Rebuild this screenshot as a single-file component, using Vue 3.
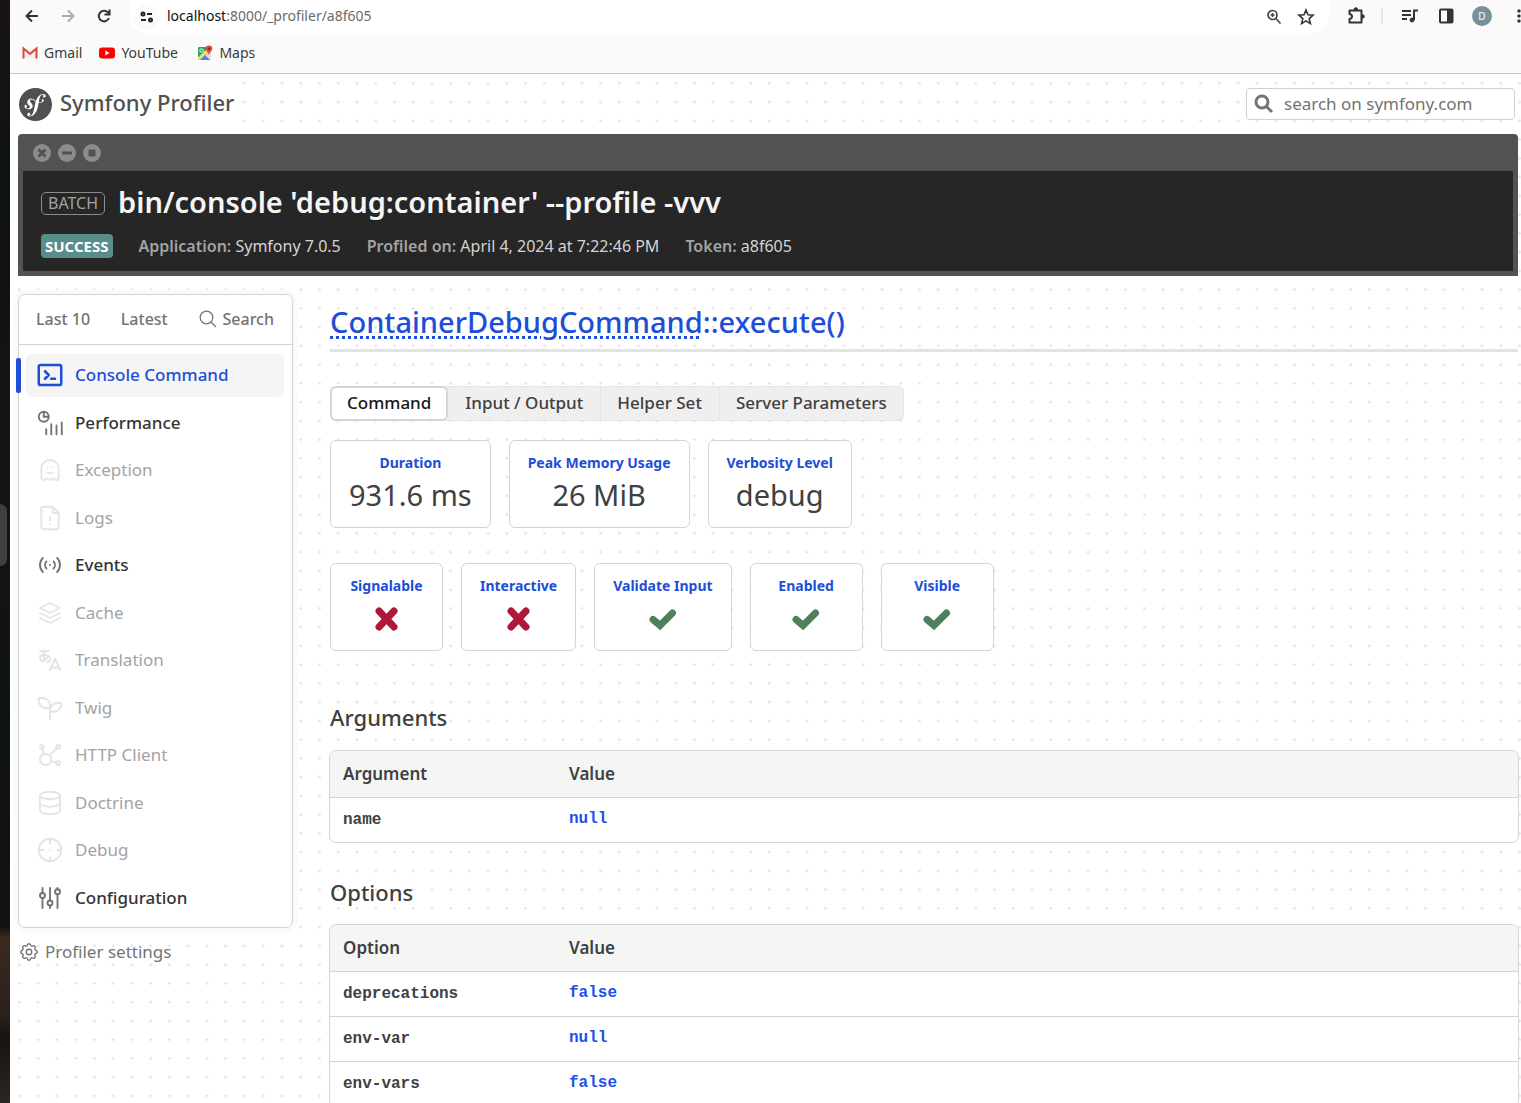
<script setup>
import { ref } from 'vue'

const menu = [
  { label: 'Console Command', state: 'active', icon: '<rect x="3" y="4" width="18" height="16" rx="1.5"/><path d="M8 9l3 3l-3 3M13 15h3"/>' },
  { label: 'Performance', state: 'enabled', icon: '<circle cx="7" cy="7" r="4"/><path d="M7 3.5v3.5h3.5M9 17v4M13 13v8M17.200 14v7M21.400 11.500v9.500"/>' },
  { label: 'Exception', state: 'disabled', icon: '<path d="M5 11a7 7 0 0 1 14 0v7a1.780 1.780 0 0 1 -3.100 1.400a1.650 1.650 0 0 0 -2.600 0a1.650 1.650 0 0 1 -2.600 0a1.650 1.650 0 0 0 -2.600 0a1.780 1.780 0 0 1 -3.100 -1.400v-7M10 10h.01M14 10h.01M10 14a3.500 3.500 0 0 0 4 0"/>' },
  { label: 'Logs', state: 'disabled', icon: '<path d="M14 3v4a1 1 0 0 0 1 1h4M17 21h-10a2 2 0 0 1 -2 -2v-14a2 2 0 0 1 2 -2h7l5 5v11a2 2 0 0 1 -2 2zM12 17h.01M12 11v3"/>' },
  { label: 'Events', state: 'enabled', icon: '<path d="M12 12h.01M14.828 9.172a4 4 0 0 1 0 5.656M17.657 6.343a8 8 0 0 1 0 11.314M9.168 14.828a4 4 0 0 1 0 -5.656M6.337 17.657a8 8 0 0 1 0 -11.314"/>' },
  { label: 'Cache', state: 'disabled', icon: '<path d="M12 4l-8 4l8 4l8 -4zM4 12l8 4l8 -4M4 16l8 4l8 -4"/>' },
  { label: 'Translation', state: 'disabled', icon: '<path d="M4 5h7M7 4c0 4.846 0 7 .5 8M10 8.500c0 2.286 -2 4.500 -3.500 4.500s-2.500 -1.135 -2.500 -2c0 -2 1 -3 3 -3s5 .57 5 2.857c0 1.524 -.667 2.571 -2 3.143M12 20l4 -9l4 9M19.100 18h-6.200"/>' },
  { label: 'Twig', state: 'disabled', icon: '<path d="M12 10a6 6 0 0 0 -6 -6h-3v2a6 6 0 0 0 6 6h3M12 14a6 6 0 0 1 6 -6h3v1a6 6 0 0 1 -6 6h-3M12 21v-11"/>' },
  { label: 'HTTP Client', state: 'disabled', icon: '<path d="M5.931 6.936l1.275 4.249m5.607 5.609l4.251 1.275M11.683 12.317l5.759 -5.759"/><circle cx="5.500" cy="5.500" r="1.500"/><circle cx="18.500" cy="5.500" r="1.500"/><circle cx="18.500" cy="18.500" r="1.500"/><circle cx="8.500" cy="15.500" r="4.500"/>' },
  { label: 'Doctrine', state: 'disabled', icon: '<ellipse cx="12" cy="6" rx="8" ry="3"/><path d="M4 6v6a8 3 0 0 0 16 0v-6M4 12v6a8 3 0 0 0 16 0v-6"/>' },
  { label: 'Debug', state: 'disabled', icon: '<circle cx="12" cy="12" r="9"/><path d="M12 3v4M12 21v-3M3 12h4M21 12h-3M12 12h.01"/>' },
  { label: 'Configuration', state: 'enabled', icon: '<circle cx="6" cy="10" r="2"/><circle cx="12" cy="16" r="2"/><circle cx="18" cy="7" r="2"/><path d="M6 4v4M6 12v8M12 4v10M12 18v2M18 4v1M18 9v11"/>' },
]

const tabs = ['Command', 'Input / Output', 'Helper Set', 'Server Parameters']
const currentTab = ref('Command')

const metrics = [
  { label: 'Duration', value: '931.6 ms' },
  { label: 'Peak Memory Usage', value: '26 MiB' },
  { label: 'Verbosity Level', value: 'debug' },
]

const flags = [
  { label: 'Signalable', on: false },
  { label: 'Interactive', on: false },
  { label: 'Validate Input', on: true },
  { label: 'Enabled', on: true },
  { label: 'Visible', on: true },
]

const tables = [
  { title: 'Arguments', column: 'Argument', rows: [['name', 'null']] },
  { title: 'Options', column: 'Option', rows: [['deprecations', 'false'], ['env-var', 'null'], ['env-vars', 'false']] },
]
</script>

<template>
  <div class="desktop">
    <div class="wallpaper"><span class="dock-edge"></span></div>
    <div class="browser">
      <div class="chrome">
        <div class="toolbar">
          <button class="tool" aria-label="Back">
            <svg width="18" height="18" viewBox="0 0 18 18" fill="none" stroke="#333" stroke-width="2"><path d="M15 9H4M9 3.500L3.500 9L9 14.500" /></svg>
          </button>
          <button class="tool" aria-label="Forward" disabled>
            <svg width="18" height="18" viewBox="0 0 18 18" fill="none" stroke="#aaa" stroke-width="2"><path d="M3 9H14M9 3.500L14.500 9L9 14.500" /></svg>
          </button>
          <button class="tool" aria-label="Reload">
            <svg width="18" height="18" viewBox="0 0 18 18" fill="none" stroke="#333" stroke-width="2"><path d="M14 11a5.300 5.300 0 1 1 -1.200 -5.700l1.700 1.700" /><path d="M14.500 2.500v5h-5" /></svg>
          </button>
          <div class="omnibox">
            <button class="site-info" aria-label="Site information">
              <svg width="14" height="12" viewBox="0 0 14 12" fill="none" stroke="#222" stroke-width="2"><circle cx="3" cy="3" r="1.500" /><path d="M7 3h5M1 9h5" /><circle cx="10.500" cy="9" r="1.500" /></svg>
            </button>
            <span class="url"><b>localhost</b>:8000/_profiler/a8f605</span>
            <button class="tool" aria-label="Zoom">
              <svg width="18" height="18" viewBox="0 0 18 18" fill="none" stroke="#444" stroke-width="1.700"><circle cx="7.500" cy="7" r="4.500" /><path d="M11 10.500L15.500 15.500" /><path d="M7.500 5v4M5.500 7h4" stroke-width="1.500" /></svg>
            </button>
            <button class="tool" aria-label="Bookmark">
              <svg width="18" height="18" viewBox="0 0 18 18" fill="none" stroke="#333" stroke-width="1.600"><path d="M9 2l2 4.800l5.100 .4l-3.900 3.400l1.200 5l-4.400 -2.700l-4.400 2.700l1.200 -5l-3.900 -3.400l5.100 -.4z" /></svg>
            </button>
          </div>
          <div class="actions">
            <button class="tool" aria-label="Extensions">
              <svg width="18" height="18" viewBox="0 0 18 18" fill="none" stroke="#333" stroke-width="2"><path d="M2.500 3.500h12v12h-12v-3.500q2.500 -.5 2.500 -2.500t-2.500 -2.500z" stroke-linejoin="round" /><path d="M7 2.500a1.800 1.800 0 0 1 3.600 0zM15.500 7.700a1.800 1.800 0 0 1 0 3.600z" fill="#333" stroke-width="1" /></svg>
            </button>
            <span class="divider"></span>
            <button class="tool" aria-label="Media controls">
              <svg width="18" height="18" viewBox="0 0 18 18" fill="none" stroke="#333" stroke-width="2"><path d="M1 4h9M1 8h9M1 12h5M13 13v-9.500h4" /><circle cx="11" cy="13" r="2" fill="#333" stroke-width="1" /></svg>
            </button>
            <button class="tool" aria-label="Side panel">
              <svg width="18" height="18" viewBox="0 0 18 18"><rect x="3" y="2.500" width="12.500" height="13" rx="1" fill="none" stroke="#333" stroke-width="2" /><path d="M10 2h6v14h-6z" fill="#333" /></svg>
            </button>
            <button class="avatar" aria-label="Profile">D</button>
            <button class="more" aria-label="Menu">
              <svg width="4" height="16" viewBox="0 0 4 16" fill="#333"><circle cx="2" cy="3" r="1.700" /><circle cx="2" cy="8" r="1.700" /><circle cx="2" cy="13" r="1.700" /></svg>
            </button>
          </div>
        </div>
        <nav class="bookmarks">
          <a href="#">
            <svg width="16" height="16" viewBox="0 0 16 16"><path d="M2 4v9h12v-9z" fill="#f1f1f1" /><path d="M1.500 13.500V3.500L8 9L14.500 3.500v10" fill="none" stroke="#d9483b" stroke-width="2" /></svg>
            Gmail
          </a>
          <a href="#">
            <svg width="16" height="16" viewBox="0 0 16 16"><rect x="0" y="2.500" width="16" height="11" rx="3" fill="#f00" /><path d="M6.300 5.500v5l4.300 -2.500z" fill="#fff" /></svg>
            YouTube
          </a>
          <a href="#">
            <svg width="16" height="16" viewBox="0 0 16 16"><rect x="1" y="2" width="13" height="13" rx="1" fill="#2fa35a" /><path d="M1 14L11 5l3 3v7H2z" fill="#f7cf47" /><path d="M14 7v8h-2L8 11z" fill="#ddd" /><path d="M3 15l5 -5l5 5z" fill="#4285f4" /><path d="M1 12.500L11 3l2 2L2 15H1z" fill="#f4dc80" /><circle cx="4.500" cy="5.500" r="1.700" fill="none" stroke="#fff" /><path d="M12 0.500a3.300 3.300 0 0 1 3.300 3.300c0 2.200 -2.500 3 -3.300 6.200c-.8 -3.200 -3.300 -4 -3.300 -6.200a3.300 3.300 0 0 1 3.300 -3.300z" fill="#e8453c" /><circle cx="12" cy="3.800" r="1.200" fill="#8c2018" /></svg>
            Maps
          </a>
        </nav>
      </div>

      <div class="page">
        <header class="header">
          <h1>
            <svg width="33" height="33" viewBox="0 0 24 24" fill="#505050"><path d="M24 12c0 6.628-5.372 12-12 12S0 18.628 0 12 5.372 0 12 0s12 5.372 12 12zm-6.753-7.561c-1.220.042-2.283.715-3.075 1.644-.878 1.020-1.461 2.229-1.881 3.461-.753-.614-1.332-1.414-2.539-1.761-.966-.297-2.015-.105-2.813.514-.41.319-.71.757-.861 1.254-.36 1.176.381 2.225.719 2.600l.737.79c.15.154.519.56.339 1.138-.193.631-.951 1.037-1.732.799-.348-.106-.848-.366-.734-.73.045-.15.152-.263.21-.391.052-.11.077-.194.095-.242.141-.465-.053-1.070-.551-1.223-.465-.143-.939-.03-1.125.566-.209.68.117 1.913 1.860 2.449 2.040.628 3.765-.484 4.009-1.932.153-.907-.255-1.582-1.006-2.447l-.612-.677c-.371-.37-.497-1.002-.114-1.485.324-.409.785-.584 1.539-.379 1.103.3 1.594 1.063 2.412 1.680-.338 1.110-.56 2.223-.759 3.222l-.123.746c-.585 3.070-1.033 4.757-2.194 5.726-.234.166-.57.416-1.073.434-.266.005-.352-.176-.355-.257-.006-.184.15-.271.255-.353.154-.083.39-.224.372-.674-.016-.532-.456-.994-1.094-.973-.477.017-1.203.465-1.176 1.286.028.85.819 1.485 2.012 1.444.638-.021 2.062-.281 3.464-1.949 1.633-1.911 2.090-4.101 2.434-5.706l.383-2.117c.213.024.439.042.688.048 2.032.044 3.049-1.010 3.064-1.776.01-.464-.304-.921-.744-.91-.386.009-.718.278-.806.654-.094.428.646.813.068 1.189-.41.266-1.146.452-2.184.3l.188-1.042c.386-1.976.859-4.407 2.661-4.467.132-.007.612.006.623.323.003.105-.022.134-.147.375-.115.155-.174.345-.168.537.017.504.4.836.957.816.743-.023.955-.748.945-1.119-.032-.874-.952-1.424-2.170-1.386z" /></svg>
            <span>Symfony Profiler</span>
          </h1>
          <form class="search" role="search" @submit.prevent>
            <label for="site-search" aria-label="Search">
              <svg width="20" height="20" viewBox="0 0 20 20" fill="none" stroke="#737373" stroke-width="3"><circle cx="8" cy="8" r="6" /><path d="M12.500 12.500l5.500 5.500" /></svg>
            </label>
            <input id="site-search" type="search" placeholder="search on symfony.com" />
          </form>
        </header>

        <section class="summary">
          <div class="window-bar">
            <svg width="18" height="18" viewBox="0 0 18 18"><circle cx="9" cy="9" r="9" fill="#8c8c8c" /><path d="M5.500 5.500l7 7M12.500 5.500l-7 7" stroke="#525252" stroke-width="3" /></svg>
            <svg width="18" height="18" viewBox="0 0 18 18"><circle cx="9" cy="9" r="9" fill="#8c8c8c" /><path d="M4 9h10" stroke="#525252" stroke-width="3" /></svg>
            <svg width="18" height="18" viewBox="0 0 18 18"><circle cx="9" cy="9" r="9" fill="#8c8c8c" /><rect x="5.500" y="5.500" width="7" height="7" rx="1" fill="#525252" /></svg>
          </div>
          <div class="terminal">
            <div class="command"><span class="batch">BATCH</span><h2>bin/console 'debug:container' --profile -vvv</h2></div>
            <dl class="metadata">
              <div class="status">SUCCESS</div>
              <div><dt>Application:</dt> <dd>Symfony 7.0.5</dd></div>
              <div><dt>Profiled on:</dt> <dd>April 4, 2024 at 7:22:46 PM</dd></div>
              <div><dt>Token:</dt> <dd>a8f605</dd></div>
            </dl>
          </div>
        </section>

        <div class="columns">
          <aside class="sidebar">
            <div class="panel">
              <div class="shortcuts">
                <a href="#">Last 10</a>
                <a href="#">Latest</a>
                <a href="#">
                  <svg width="18" height="18" viewBox="0 0 18 18" fill="none" stroke="currentColor" stroke-width="1.300"><circle cx="7.500" cy="7.500" r="6.300" /><path d="M12 12l5 5" /></svg>
                  Search
                </a>
              </div>
              <ul class="menu">
                <li v-for="item in menu" :key="item.label" :class="item.state">
                  <a href="#">
                    <svg width="30" height="30" viewBox="0 0 24 24" v-html="item.icon"></svg>
                    {{ item.label }}
                  </a>
                </li>
              </ul>
            </div>
            <a class="settings" href="#">
              <svg width="22" height="22" viewBox="0 0 24 24" fill="none" stroke="currentColor" stroke-width="1.500"><path d="M10.325 4.317c.426 -1.756 2.924 -1.756 3.350 0a1.724 1.724 0 0 0 2.573 1.066c1.543 -.94 3.310 .826 2.370 2.370a1.724 1.724 0 0 0 1.065 2.572c1.756 .426 1.756 2.924 0 3.350a1.724 1.724 0 0 0 -1.066 2.573c.94 1.543 -.826 3.310 -2.370 2.370a1.724 1.724 0 0 0 -2.572 1.065c-.426 1.756 -2.924 1.756 -3.350 0a1.724 1.724 0 0 0 -2.573 -1.066c-1.543 .94 -3.310 -.826 -2.370 -2.370a1.724 1.724 0 0 0 -1.065 -2.572c-1.756 -.426 -1.756 -2.924 0 -3.350a1.724 1.724 0 0 0 1.066 -2.573c-.94 -1.543 .826 -3.310 2.370 -2.370c1 .608 2.296 .07 2.572 -1.065z" /><circle cx="12" cy="12" r="3" /></svg>
              Profiler settings
            </a>
          </aside>

          <main class="content">
            <h2 class="title"><a href="#">ContainerDebugCommand</a>::execute()</h2>
            <div class="tabs" role="tablist">
              <button
                v-for="tab in tabs"
                :key="tab"
                role="tab"
                :aria-selected="tab === currentTab"
                :class="{ current: tab === currentTab }"
                @click="currentTab = tab"
              >{{ tab }}</button>
            </div>
            <div class="metrics">
              <div v-for="m in metrics" :key="m.label" class="metric">
                <span class="label">{{ m.label }}</span>
                <span class="value">{{ m.value }}</span>
              </div>
            </div>
            <div class="metrics">
              <div v-for="f in flags" :key="f.label" class="metric">
                <span class="label">{{ f.label }}</span>
                <span class="value icon">
                  <svg v-if="f.on" width="28" height="24" viewBox="0 0 28 24" fill="none" stroke="#4f805d" stroke-width="7" stroke-linecap="round"><path d="M4 12.500L11 18.500L23.500 6" /></svg>
                  <svg v-else width="28" height="24" viewBox="0 0 28 24" fill="none" stroke="#b0183a" stroke-width="7" stroke-linecap="round"><path d="M6 4L21 20M21 4L6 20" /></svg>
                </span>
              </div>
            </div>
            <section v-for="t in tables" :key="t.title" class="block">
              <h3>{{ t.title }}</h3>
              <table>
                <thead>
                  <tr><th scope="col">{{ t.column }}</th><th scope="col">Value</th></tr>
                </thead>
                <tbody>
                  <tr v-for="[name, value] in t.rows" :key="name"><th scope="row">{{ name }}</th><td>{{ value }}</td></tr>
                </tbody>
              </table>
            </section>
          </main>
        </div>
      </div>
    </div>
  </div>
</template>

<style>
html,
body {
  margin: 0;
  overflow: hidden;
}
</style>

<style scoped>
* {
  box-sizing: border-box;
}
.desktop {
  display: flex;
  height: 100vh;
  overflow: hidden;
  font-family: "Noto Sans", sans-serif;
  font-size: 17px;
  color: #404040;
}
h1, h2, h3, dl, dd, ul {
  margin: 0;
  padding: 0;
  font-weight: 500;
}
a {
  color: inherit;
  text-decoration: none;
}
button {
  font: inherit;
  color: inherit;
  border: 0;
  background: none;
  padding: 0;
}
svg {
  display: block;
  flex: none;
}

/* Desktop strip left of the window */
.wallpaper {
  flex: 0 0 10px;
  display: flex;
  align-items: center;
  background: linear-gradient(#191413 0, #0f1313 16%, #151412 45%, #0f1413 65%, #121212 84%, #3b291e 85%, #2b211d 92%, #171412 94%, #2b2725 100%);
}
.dock-edge {
  width: 7px;
  height: 62px;
  margin-bottom: 34px;
  border-radius: 0 8px 8px 0;
  background: #3d4040;
}
.browser {
  flex: 1;
  min-width: 0;
}

/* Browser chrome */
.chrome {
  height: 74px;
  background: #fafafa;
  border-bottom: 1px solid #c6c6c6;
  font-size: 14px;
  color: #3a3a3a;
}
.toolbar {
  display: flex;
  height: 33px;
  padding-left: 13px;
  gap: 18px;
}
.toolbar > .tool,
.actions,
.omnibox {
  height: 32px;
}
.omnibox {
  flex: 1;
  display: flex;
  align-items: center;
  gap: 14px;
  height: 33px;
  margin-left: -1px;
  padding: 0 14px 0 4px;
  background: #fff;
  border-radius: 0 0 17px 17px;
}
.site-info {
  display: grid;
  place-items: center;
  width: 26px;
  height: 26px;
  border-radius: 13px;
  background: #fafafa;
}
.url {
  flex: 1;
  margin-left: -7px;
  padding-bottom: 2px;
  color: #6b6b6b;
}
.url b {
  font-weight: 400;
  color: #111;
}
.actions {
  display: flex;
  align-items: center;
}
.divider {
  width: 2px;
  height: 16px;
  margin: 0 18px 0 16px;
  background: #e6e6e6;
}
.actions .tool + .tool {
  margin-left: 18px;
}
.avatar {
  width: 20px;
  height: 20px;
  margin: 0 25px 0 17px;
  border-radius: 10px;
  background: #78909c;
  color: #fff;
  font-size: 10px;
  line-height: 20px;
}
.bookmarks {
  display: flex;
  gap: 17px;
  padding: 10px 12px;
}
.bookmarks a {
  display: flex;
  align-items: center;
  gap: 6px;
  line-height: 20px;
}
.bookmarks a + a {
  min-width: 81px;
}

/* Profiler page */
.page {
  height: 100%;
  padding: 0 3px 0 8px;
  background: #fff url("data:image/svg+xml,%3Csvg xmlns='http://www.w3.org/2000/svg' width='75' height='75'%3E%3Cdefs%3E%3Cpattern id='d' width='18.750' height='18.750' patternUnits='userSpaceOnUse'%3E%3Ccircle cx='9.400' cy='9.400' r='1.300' fill='%23e0e0e0'/%3E%3C/pattern%3E%3C/defs%3E%3Crect width='75' height='75' fill='url(%23d)'/%3E%3C/svg%3E");
}
.header {
  display: flex;
  justify-content: space-between;
  align-items: center;
  height: 60px;
  padding-right: 3px;
}
.header h1 {
  display: flex;
  align-items: center;
  gap: 8px;
  height: 60px;
  padding: 0 4px 0 1px;
  background: #fff;
  color: #505050;
  font-size: 22px;
}
.header h1 span {
  padding-bottom: 4px;
}
.search {
  display: flex;
  align-items: center;
  width: 269px;
  height: 32px;
  padding-left: 7px;
  gap: 10px;
  background: #fff;
  border: 1px solid #d0d0d0;
  border-radius: 4px;
}
.search input {
  flex: 1;
  min-width: 0;
  padding: 0 0 2px;
  border: 0;
  outline: 0;
  background: none;
  font: inherit;
}
.search input::placeholder {
  color: #737373;
}
.summary {
  border: 5px solid #525252;
  border-top: 0;
  border-radius: 4px 4px 0 0;
  background: #525252;
}
.window-bar {
  display: flex;
  align-items: center;
  gap: 7px;
  height: 37px;
  padding-left: 10px;
}
.terminal {
  height: 100px;
  padding: 11px 18px;
  background: #262626;
}
.command {
  display: flex;
  align-items: center;
  gap: 13px;
  height: 42px;
}
.command h2 {
  padding-bottom: 4px;
  font-size: 29px;
  font-weight: 600;
  color: #f5f5f5;
}
.batch {
  padding: 0 6px;
  border: 1px solid #8c8c8c;
  border-radius: 5px;
  color: #a3a3a3;
  font-size: 16px;
  line-height: 21px;
}
.metadata {
  display: flex;
  align-items: center;
  gap: 26px;
  margin-top: 10px;
  font-size: 16px;
  line-height: 24px;
}
.metadata dt,
.metadata dd {
  display: inline;
  font-weight: 400;
  color: #d4d4d4;
}
.metadata dt {
  font-weight: 600;
  color: #a3a3a3;
}
.metadata .status {
  padding: 0 4px;
  border-radius: 4px;
  background: #578e8b;
  color: #fff;
  font-size: 15px;
  font-weight: 700;
}
.columns {
  display: flex;
  gap: 36px;
  padding-top: 18px;
}
.sidebar {
  flex: 0 0 275px;
}
.panel {
  border: 1px solid #d4d4d4;
  border-radius: 7px;
  background: #fff;
  box-shadow: 0 0 0 4px #fafafa;
}
.shortcuts {
  display: flex;
  justify-content: space-between;
  align-items: center;
  height: 50px;
  padding: 0 18px 2px 17px;
  border-bottom: 1px solid #d4d4d4;
  color: #737373;
  font-size: 16px;
  font-weight: 500;
}
.shortcuts a {
  display: flex;
  align-items: center;
  gap: 6px;
}
.menu {
  display: grid;
  grid-auto-rows: 1fr;
  gap: 5px;
  height: 582px;
  padding: 9px 8px 8px 7px;
  list-style: none;
}
.menu li {
  position: relative;
}
.menu a {
  display: flex;
  align-items: center;
  gap: 10px;
  height: 100%;
  padding-left: 9px;
  border-radius: 5px;
  line-height: 24px;
}
.menu svg {
  fill: none;
  stroke: #737373;
  stroke-width: 1.5;
  stroke-linecap: round;
  stroke-linejoin: round;
}
.menu .enabled {
  color: #333;
  font-weight: 500;
}
.menu .disabled {
  color: #a3a3a3;
  font-weight: 400;
}
.menu .disabled svg {
  stroke: #e4e4e4;
}
.menu .active {
  color: #1d4ed8;
  font-weight: 500;
}
.menu .active a {
  background: #f5f5f5;
}
.menu .active svg {
  stroke: #1d4ed8;
  stroke-width: 2;
}
.menu .active::before {
  content: "";
  position: absolute;
  left: -10px;
  top: 4px;
  bottom: 4px;
  width: 5px;
  border-radius: 2px;
  background: #1d4ed8;
}
.settings {
  display: flex;
  align-items: center;
  gap: 5px;
  margin-top: 12px;
  line-height: 24px;
  color: #737373;
}

.content {
  flex: 1;
  min-width: 0;
  padding-left: 1px;
}
.title {
  height: 58px;
  padding-top: 8px;
  border-bottom: 3px solid #e2e2e2;
  color: #1d4ed8;
  font-size: 29px;
  line-height: 40px;
}
.title a {
  text-decoration: underline dotted 3px;
  text-underline-offset: 3px;
}
.tabs {
  display: inline-flex;
  height: 35px;
  margin: 34px 0 19px;
  border-radius: 6px;
  background: #efefef;
  box-shadow: inset 0 0 0 1px #e5e5e5;
}
.tabs button {
  padding: 0 17px 2px;
  font-size: 17px;
  font-weight: 500;
}
.tabs button + button + button {
  box-shadow: inset 1px 0 #e5e5e5;
}
.tabs .current {
  border-radius: 6px;
  background: #fff;
  box-shadow: inset 0 0 0 2px #d4d4d4;
  color: #171717;
}
.metrics {
  display: flex;
  gap: 18px;
  margin-bottom: 35px;
}
.metric {
  display: flex;
  flex-direction: column;
  align-items: center;
  min-width: 113px;
  height: 88px;
  padding: 12px 18px;
  border: 1px solid #d4d4d4;
  border-radius: 6px;
  background: #fff;
}
.metric .label {
  flex: none;
  color: #1d4ed8;
  font-size: 14px;
  font-weight: 700;
  line-height: 20px;
}
.metric .value {
  flex: none;
  display: flex;
  align-items: center;
  height: 42px;
  font-size: 29px;
}
.metric .icon {
  height: 46px;
}
.block {
  margin-bottom: 34px;
}
.metrics + .block {
  margin-top: 51px;
}
.block h3 {
  margin-bottom: 18px;
  font-size: 22px;
  line-height: 30px;
}
.block + .block h3 {
  margin-bottom: 17px;
}
table {
  width: calc(100% + 2px);
  margin-left: -1px;
  border: 1px solid #d4d4d4;
  border-spacing: 0;
  border-radius: 7px;
  background: #fff;
  overflow: hidden;
}
th,
td {
  height: 45px;
  padding: 0 13px;
  text-align: left;
}
thead th {
  height: 46px;
  padding-bottom: 2px;
  background: #f5f5f5;
  font-weight: 600;
}
th:first-child {
  width: 226px;
}
tbody th,
tbody td {
  border-top: 1px solid #d4d4d4;
  font-family: "Liberation Mono", monospace;
  font-size: 16px;
  font-weight: 700;
}
tbody td {
  padding-bottom: 2px;
  color: #2050e8;
}
</style>
